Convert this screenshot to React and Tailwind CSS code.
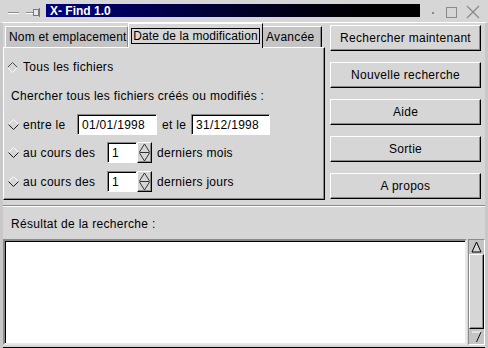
import React from "react";

const raised =
  "border border-t-white border-l-white border-b-black border-r-black shadow-[inset_-1px_-1px_0_#8a8a8a]";
const sunken =
  "border border-t-[#8a8a8a] border-l-[#8a8a8a] border-b-white border-r-white shadow-[inset_1px_1px_0_#000]";

const Diamond = ({ on }) => (
  <svg width="11" height="11" viewBox="0 0 11 11" className="shrink-0">
    <polyline points="0.5,5.5 5.5,0.5 10.5,5.5" fill="none" stroke={on ? "#4a4a4a" : "#ffffff"} />
    <polyline points="0.5,5.5 5.5,10.5 10.5,5.5" fill="none" stroke={on ? "#ffffff" : "#1a1a1a"} />
  </svg>
);

const Spin = () => (
  <div className="flex h-[21px]">
    <div className={`w-[30px] bg-white flex items-center pl-[4px] ${sunken}`}>1</div>
    <div className={`w-[15px] flex items-center justify-center bg-[#d6d6d6] ${raised}`}>
      <svg width="11" height="19" viewBox="0 0 11 19">
        <polyline points="0.5,9 5.5,1 10.5,9" fill="none" stroke="#333" />
        <line x1="0.5" y1="9.5" x2="10.5" y2="9.5" stroke="#333" />
        <polyline points="0.5,10 5.5,18 10.5,10" fill="none" stroke="#333" />
      </svg>
    </div>
  </div>
);

const buttons = ["Rechercher maintenant", "Nouvelle recherche", "Aide", "Sortie", "A propos"];

export default function App() {
  return (
    <div
      className="w-[488px] h-[348px] bg-[#d6d6d6] text-black text-[12px] tracking-[0.3px] overflow-hidden flex flex-col"
      style={{ fontFamily: '"Liberation Sans", Arial, sans-serif' }}
    >
      {/* barre de titre */}
      <div className="h-[22px] flex items-center shrink-0">
        <svg width="46" height="22" viewBox="0 0 46 22" className="shrink-0">
          <line x1="8" y1="12.5" x2="19" y2="12.5" stroke="#8a8a8a" />
          <line x1="8" y1="13.5" x2="19" y2="13.5" stroke="#ffffff" />
          <line x1="26" y1="12.5" x2="33" y2="12.5" stroke="#8a8a8a" />
          <line x1="26" y1="13.5" x2="33" y2="13.5" stroke="#ffffff" />
          <rect x="33.5" y="9.5" width="5" height="6" fill="#e8e8e8" stroke="#7a7a7a" />
          <line x1="39.5" y1="8" x2="39.5" y2="17" stroke="#7a7a7a" />
        </svg>
        <div className="w-[374px] h-[13px] mt-[-1px] bg-gradient-to-r from-[#000080] to-[#000000] flex items-center pl-[4px]">
          <span className="text-white font-bold text-[12px] tracking-normal leading-none">X- Find 1.0</span>
        </div>
        <svg width="68" height="22" viewBox="0 0 68 22" className="shrink-0">
          <rect x="12" y="12" width="2" height="2" fill="#8a8a8a" />
          <rect x="26.5" y="7.5" width="10" height="10" fill="none" stroke="#8a8a8a" />
          <line x1="47" y1="6" x2="59" y2="18" stroke="#8a8a8a" strokeWidth="1.2" />
          <line x1="59" y1="6" x2="47" y2="18" stroke="#8a8a8a" strokeWidth="1.2" />
        </svg>
      </div>

      <div className="flex-1 flex flex-col border-t border-t-white border-l-[3px] border-l-[#c8c8c8] border-r-[3px] border-r-[#c8c8c8]">
        {/* partie haute */}
        <div className="flex">
          <div className="w-[322px] flex flex-col">
            <div className="h-[24px] flex items-end pl-[2px] whitespace-nowrap">
              <div className="w-[123px] h-[21px] bg-[#c4c4c4] border-t border-l border-t-white border-l-white border-r border-r-[#8a8a8a] flex items-center pl-[3px] tracking-[0.2px]">
                Nom et emplacement
              </div>
              <div className="w-[135px] h-[25px] -mb-[1px] relative z-10 bg-[#d6d6d6] border-t border-l border-t-white border-l-white border-r border-r-black flex items-center justify-center">
                <span className="border border-black px-[1px] h-[16px] leading-[14px] tracking-[0.1px]">Date de la modification</span>
              </div>
              <div className="w-[59px] h-[21px] bg-[#c4c4c4] border-t border-t-white border-r border-r-black shadow-[inset_-1px_0_0_#8a8a8a] flex items-center pl-[3px]">
                Avancée
              </div>
            </div>
            <div className="h-[153px] border-t border-l border-t-white border-l-white border-r border-b border-r-black border-b-black shadow-[inset_-1px_-1px_0_#8a8a8a] flex flex-col pl-[3px] whitespace-nowrap">
              <div className="h-[18px] mt-[10px] flex items-center gap-[5px]">
                <Diamond on />
                <span>Tous les fichiers</span>
              </div>
              <div className="h-[16px] mt-[12px] flex items-center pl-[4px]">
                Chercher tous les fichiers créés ou modifiés :
              </div>
              <div className="h-[21px] mt-[10px] flex items-center">
                <span className="ml-[1px]"><Diamond /></span>
                <span className="ml-[4px] w-[54px]">entre le</span>
                <div className={`w-[80px] h-[21px] bg-white flex items-center pl-[4px] ${sunken}`}>01/01/1998</div>
                <span className="ml-[5px] w-[29px]">et le</span>
                <div className={`w-[79px] h-[21px] bg-white flex items-center pl-[4px] ${sunken}`}>31/12/1998</div>
              </div>
              <div className="h-[21px] mt-[7px] flex items-center">
                <span className="ml-[1px]"><Diamond /></span>
                <span className="ml-[4px] w-[84px]">au cours des</span>
                <Spin />
                <span className="ml-[5px]">derniers mois</span>
              </div>
              <div className="h-[21px] mt-[8px] flex items-center">
                <span className="ml-[1px]"><Diamond /></span>
                <span className="ml-[4px] w-[84px]">au cours des</span>
                <Spin />
                <span className="ml-[5px]">derniers jours</span>
              </div>
            </div>
          </div>

          <div className="ml-[5px] w-[151px] flex flex-col gap-[11px] pt-[2px] whitespace-nowrap">
            {buttons.map((b) => (
              <button key={b} className={`h-[26px] flex items-center justify-center bg-[#d6d6d6] ${raised}`}>
                {b}
              </button>
            ))}
          </div>
        </div>

        {/* séparateur */}
        <div className="mt-[5px] border-t border-t-[#8a8a8a] border-b border-b-white" />

        <div className="h-[16px] mt-[9px] flex items-center pl-[8px]">Résultat de la recherche :</div>

        {/* zone de résultat */}
        <div className="mt-[7px] flex flex-1">
          <div className="flex-1 bg-white border-2 border-t-[#8a8a8a] border-l-[#8a8a8a] border-b-[#e8e8e8] border-r-[#e8e8e8] shadow-[inset_1px_1px_0_#000]" />
          <div className="w-[17px] ml-[1px] flex flex-col bg-[#c4c4c4] border border-t-[#8a8a8a] border-l-[#8a8a8a] border-b-white border-r-white">
            <div className="h-[14px] flex items-center justify-center">
              <svg width="11" height="12" viewBox="0 0 11 12">
                <polygon points="5.5,1 10,11 1,11" fill="#d6d6d6" stroke="#000" />
              </svg>
            </div>
            <div className={`flex-1 bg-[#d6d6d6] ${raised}`} />
            <div className="h-[15px] flex items-center justify-center">
              <svg width="11" height="12" viewBox="0 0 11 12">
                <polyline points="1,1 10,1 5.5,11" fill="none" stroke="#ffffff" />
                <line x1="10" y1="1" x2="5.5" y2="11" stroke="#000" />
              </svg>
            </div>
          </div>
        </div>
        <div className="h-[3px] shrink-0 border-b border-b-black" />
      </div>
    </div>
  );
}
